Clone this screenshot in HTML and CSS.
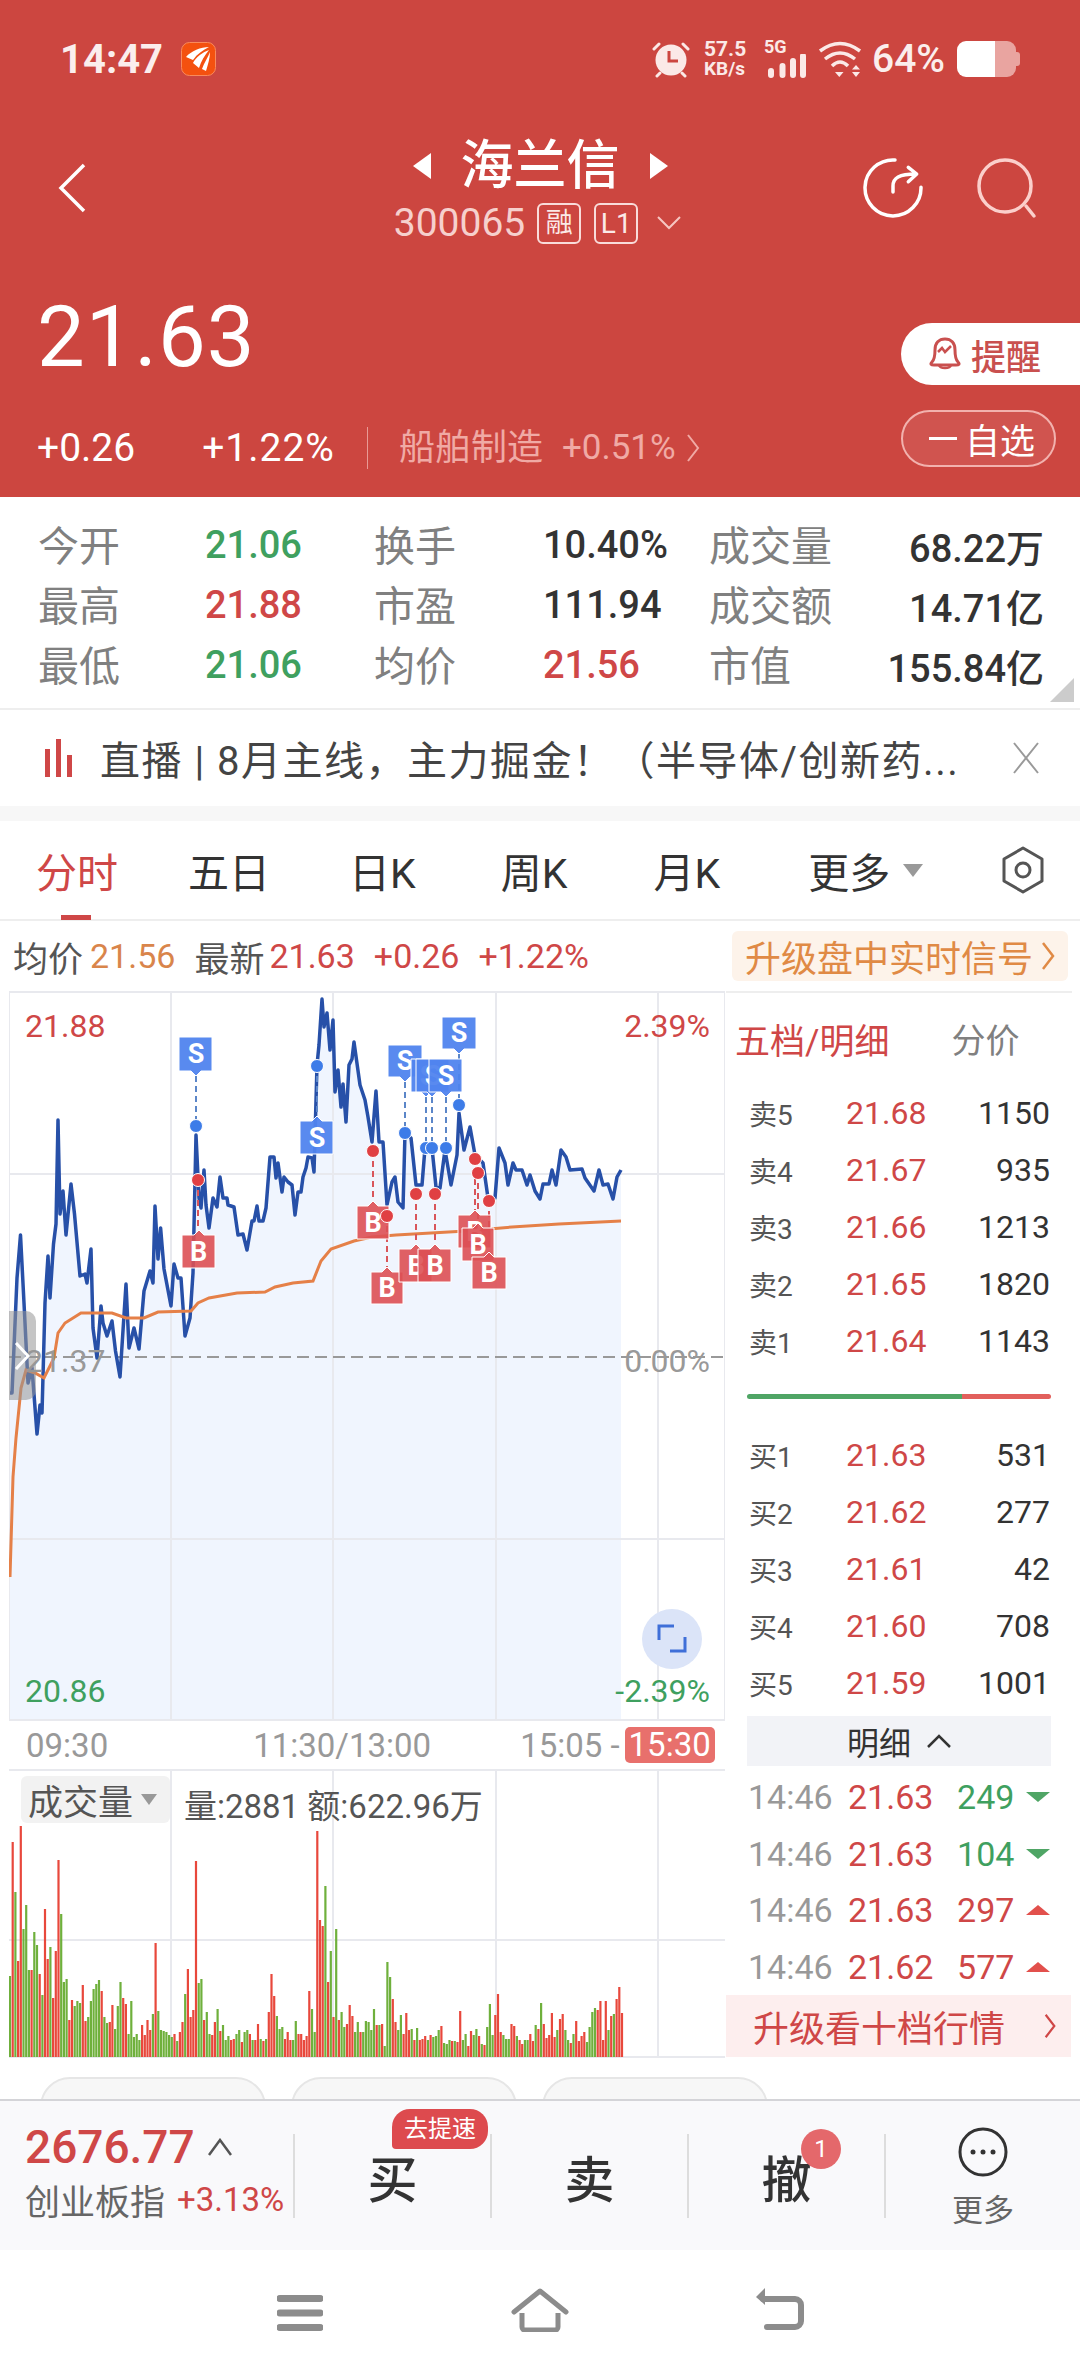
FILE: index.html
```html
<!DOCTYPE html>
<html lang="zh-CN">
<head>
    <meta charset="UTF-8">
    <meta name="viewport" content="width=device-width, initial-scale=1.0">
    <title>海兰信 300065</title>
    <link rel="stylesheet" href="styles.css">
</head>
<body>
<div class="page">
    <!-- 顶部红色行情区 -->
    <div class="head">
        <div class="status">
            <span class="clock">14:47</span>
            <svg class="app-logo" viewBox="0 0 35 34"><rect x=".5" y=".5" width="34" height="33" rx="8" fill="#f4510f" stroke="#f98a5c"/><path d="M28 5C20 5 10 9 5 15l7 3C16 12 22 8 28 5zM28 8C22 10 15 15 12 21l6 5C20 19 24 13 28 8zM29 10C27 15 23 21 21 27l4 2C27 22 29 16 29 10z" fill="#fff"/></svg>
            <div class="status-right">
                <svg class="ico-alarm" viewBox="0 0 38 38"><circle cx="19" cy="20" r="15.500" fill="#fbe9e7"/><path d="M17 11v10h9" fill="none" stroke="#cc4640" stroke-width="3"/><path d="M2 9l5-5M36 9l-5-5M8 33l-3 3M30 33l3 3" stroke="#fbe9e7" stroke-width="3" stroke-linecap="round"/></svg>
                <div class="speed"><span class="speed-num">57.5</span><span>KB/s</span></div>
                <div class="net">
                    <span class="net-text">5G</span>
                    <svg class="ico-signal" viewBox="0 0 42 24"><path d="M7 21v-4M18.500 21v-9M29 21V7M39 21V2" stroke="#fbe9e7" stroke-width="6" stroke-linecap="round"/></svg>
                </div>
                <svg class="ico-wifi" viewBox="0 0 44 36"><path d="M2 10Q22-5 42 10M7 18Q22 6 37 18M14 25Q22 17 30 25" fill="none" stroke="#fbe9e7" stroke-width="3.5"/><path d="M17 31h8.500l-4.200 5zM34 28.500l4-4.500 4 4.500zM34 31h8l-4 5z" fill="#fbe9e7"/></svg>
                <span class="batt-num">64%</span>
                <div class="battery"><div class="battery-fill"></div></div>
            </div>
        </div>
        <div class="nav">
            <svg class="ico-back" viewBox="0 0 28 50"><path d="M26 2L3 25l23 23" fill="none" stroke="#fff" stroke-width="3.5"/></svg>
            <div class="title-box">
                <div class="title">
                    <span class="tri-left"></span>
                    <span>海兰信</span>
                    <span class="tri-right"></span>
                </div>
                <div class="code">
                    <span>300065</span>
                    <span class="tag">融</span>
                    <span class="tag tag-l1">L1</span>
                    <svg class="ico-down" viewBox="0 0 24 14"><path d="M1 1l11 11L23 1" fill="none" stroke="#f6c6c2" stroke-width="2"/></svg>
                </div>
            </div>
            <div class="nav-right">
                <svg class="ico-share" viewBox="0 0 60 60"><path d="M32 2A28 28 0 1 0 58 29.300" fill="none" stroke="#fff" stroke-width="3.5" stroke-linecap="round"/><path d="M30 34v-6c0-8 6-12 23-12M45.300 9.300L53.700 16l-8.400 7.700" fill="none" stroke="#fff" stroke-width="3.5" stroke-linecap="round" stroke-linejoin="round"/></svg>
                <svg class="ico-search" viewBox="0 0 62 62"><circle cx="28" cy="29" r="26" fill="none" stroke="#fbcfcb" stroke-width="3.5"/><path d="M49 49l8 10" stroke="#fbcfcb" stroke-width="3.5" stroke-linecap="round"/></svg>
            </div>
        </div>
        <div class="quote">
            <div class="quote-left">
                <div class="price">21.63</div>
                <div class="change">
                    <span class="chg-a">+0.26</span>
                    <span class="chg-b">+1.22%</span>
                    <span class="chg-sep"></span>
                    <span class="sector">船舶制造</span>
                    <span class="sector-pct">+0.51%</span>
                    <svg class="ico-more" viewBox="0 0 14 30"><path d="M2 2l10 13L2 28" fill="none" stroke="#f0aaa5" stroke-width="2"/></svg>
                </div>
            </div>
            <div class="quote-right">
                <div class="btn-remind">
                    <svg class="ico-bell" viewBox="0 0 34 34"><path d="M4 25C7 22 7 18 7 13 7 6 11 2 17 2s10 4 10 11c0 5 0 9 3 12 2 2 1 3-2 3H6c-3 0-4-1-2-3z" fill="none" stroke="#c9504f" stroke-width="3" stroke-linejoin="round"/><path d="M11 28c1 4 11 4 12 0M10 15l4-4 3 4 6-6" fill="none" stroke="#c9504f" stroke-width="2.5"/></svg>
                    <span>提醒</span>
                </div>
                <div class="btn-watch"><span class="watch-dash"></span>自选</div>
            </div>
        </div>
    </div>

    <!-- 盘口数据 -->
    <div class="stats">
        <span class="lab">今开</span><span class="val green">21.06</span><span class="lab">换手</span><span class="val">10.40%</span><span class="lab">成交量</span><span class="val end">68.22万</span>
        <span class="lab">最高</span><span class="val red">21.88</span><span class="lab">市盈</span><span class="val">111.94</span><span class="lab">成交额</span><span class="val end">14.71亿</span>
        <span class="lab">最低</span><span class="val green">21.06</span><span class="lab">均价</span><span class="val red">21.56</span><span class="lab">市值</span><span class="val end">155.84亿</span>
        <span class="corner"></span>
    </div>

    <div class="live">
        <div class="live-bars"><i></i><i></i><i></i></div>
        <div class="live-text">直播 | 8月主线，主力掘金！（半导体/创新药...</div>
        <svg class="ico-close" viewBox="0 0 28 34"><path d="M2 2l24 30M26 2L2 32" stroke="#9a9a9a" stroke-width="2" fill="none"/></svg>
    </div>
    <div class="gap-band"></div>

    <div class="tabs">
        <div class="tab current">分时</div>
        <div class="tab t2">五日</div>
        <div class="tab t3">日K</div>
        <div class="tab t4">周K</div>
        <div class="tab t5">月K</div>
        <div class="tab t6">更多<span class="tab-tri"></span></div>
        <svg class="ico-hex" viewBox="0 0 44 48"><path d="M22 2l19 11v22L22 46 3 35V13z" fill="none" stroke="#555" stroke-width="3" stroke-linejoin="round"/><circle cx="22" cy="24" r="7" fill="none" stroke="#555" stroke-width="3"/></svg>
    </div>

    <div class="info">
        <span class="info-lab">均价</span><span class="info-avg">21.56</span>
        <span class="info-lab info-new">最新</span><span class="info-red">21.63</span>
        <span class="info-red info-c1">+0.26</span>
        <span class="info-red info-c2">+1.22%</span>
        <div class="upgrade-pill">升级盘中实时信号<svg class="ico-more2" viewBox="0 0 14 30"><path d="M2 2l10 13L2 28" fill="none" stroke="#e08a45" stroke-width="2.5"/></svg></div>
    </div>

    <div class="main">
        <div class="left">
            <svg class="chart" viewBox="9 991 716 730">
                <polygon id="area" class="area" points=""/>
                <path class="grid" d="M9 992H725V1720H9zM171 992V1720M333 992V1720M496 992V1720M658 992V1720M9 1174H725M9 1539H725"/>
                <path class="zero" d="M9 1357H725"/>
                <polyline id="price-line" class="line-price" points="10,1393 12,1393 17,1278 20.5,1235 24,1303 28,1383 32,1368 37,1434 40,1405 42,1413 45,1303 48,1256 50,1298 53.5,1244 56,1224 58,1120 60,1214 63,1191 66,1235 71,1184 74.5,1214 80,1276 85,1274 87,1283 91,1249 93,1328 97,1358 101,1306 103,1323 107,1336 112,1321 115.5,1351 120,1377 126,1284 129,1348 134,1328 139,1349 144,1291 150,1271 153,1283 155,1206 158,1259 160.6,1228 164,1269 171,1306 174,1264 178,1278 181,1278 185,1336 190,1318 193,1273 196,1135 199,1198 201,1208 204,1170 206,1205 209,1228 213,1198 217,1207 220,1177 223,1198 227,1198 228,1205 234,1207 238,1235 243,1234 247,1250 252,1221 254,1221 257,1206 259,1221 263,1221 266,1208 270,1157 274,1157 276,1178 278,1163 282,1192 284,1177 288,1182 292,1185 295,1215 298,1192 301,1192 303,1177 306,1168 308,1157 312,1158 314,1172 317,1065 319,1045 322,999 324,1027 327,1013 330,1050 333,1020 335,1092 338,1070 341,1107 343,1084 346,1122 349,1065 352,1059 354,1042 360,1085 365,1100 368,1117 372,1142 376,1091 379,1142 383,1142 387,1205 392,1182 395,1177 398,1202 403,1208 405,1133 411,1138 416,1185 422,1185 425,1148 432,1148 436,1187 440,1188 445,1150 451,1185 457,1155 459,1113 464,1150 470,1127 475,1155 483,1163 488,1198 495,1198 499,1148 505,1163 508,1185 513,1163 516,1170 522,1170 527,1185 530,1175 535,1191 540,1199 543,1184 549,1184 552,1170 556,1185 561,1150 566,1157 570,1170 582,1169 585,1178 594,1191 599,1170 603,1185 608,1184 613,1199 617,1177 621,1170"/>
                <polyline class="line-avg" points="10,1577 13,1477 16,1438 21,1388 26,1370 35,1373 44,1378 54,1358 58,1333 65,1323 81,1313 98,1313 112,1313 126,1318 144,1318 158,1312 191,1311 198,1303 209,1298 237,1293 265,1292 275,1287 293,1283 313,1281 321,1261 331,1249 354,1241 372,1237 396,1235 466,1231 512,1227 559,1224 621,1221"/>

                <!-- 买卖点 -->
                <path class="lead-s" d="M196 1076V1126M317 1066V1116M405 1082V1133M426 1097V1148M432 1097V1148M446 1097V1148M459 1054V1105"/>
                <path class="lead-b" d="M198 1180V1230M373 1151V1201M387 1216V1267M416 1194V1244M435 1194V1244M475 1159V1210M478 1173V1223M489 1201V1252"/>
                <g class="tag-b"><path d="M182 1235h12l5-5 5 5h11v33h-33z"/><text x="198.5" y="1261">B</text></g>
                <g class="tag-b"><path d="M357 1206h11l5-5 5 5h11v33h-32z"/><text x="373" y="1232">B</text></g>
                <g class="tag-b"><path d="M371 1272h11l5-5 5 5h11v32h-32z"/><text x="387" y="1297">B</text></g>
                <g class="tag-b"><path d="M399 1249h12l5-5 5 5h11v33h-33z"/><text x="416" y="1275">B</text></g>
                <g class="tag-b"><path d="M418 1249h12l5-5 5 5h11v33h-33z"/><text x="435" y="1275">B</text></g>
                <g class="tag-b"><path d="M458 1215h12l5-5 5 5h11v33h-33z"/><text x="475" y="1241">B</text></g>
                <g class="tag-b"><path d="M462 1228h11l5-5 5 5h11v33h-32z"/><text x="478" y="1254">B</text></g>
                <g class="tag-b"><path d="M472 1257h12l5-5 5 5h12v32h-34z"/><text x="489" y="1282">B</text></g>
                <g class="tag-s"><path d="M179 1037h33v34h-11l-5 5-5-5h-12z"/><text x="196" y="1063">S</text></g>
                <g class="tag-s"><path d="M300 1121h12l5-5 5 5h11v33h-33z"/><text x="317" y="1147">S</text></g>
                <g class="tag-s"><path d="M388 1045h34v32h-12l-5 5-5-5h-12z"/><text x="405" y="1070">S</text></g>
                <g class="tag-s"><path d="M411 1059h34v33h-14l-5 5-5-5h-10z"/><text x="428" y="1085">S</text></g>
                <g class="tag-s"><path d="M416 1059h33v33h-12l-5 5-5-5h-11z"/><text x="433" y="1085">S</text></g>
                <g class="tag-s"><path d="M429 1059h33v33h-11l-5 5-5-5h-12z"/><text x="446" y="1085">S</text></g>
                <g class="tag-s"><path d="M442 1017h34v32h-12l-5 5-5-5h-12z"/><text x="459" y="1042">S</text></g>
                <g class="dot-s">
                    <circle cx="196" cy="1126" r="6.5"/><circle cx="317" cy="1066" r="6.5"/><circle cx="405" cy="1133" r="6.5"/><circle cx="426" cy="1148" r="6.5"/><circle cx="432" cy="1148" r="6.5"/><circle cx="446" cy="1148" r="6.5"/><circle cx="459" cy="1105" r="6.5"/>
                </g>
                <g class="dot-b">
                    <circle cx="198" cy="1180" r="6.5"/><circle cx="373" cy="1151" r="6.5"/><circle cx="387" cy="1216" r="6.5"/><circle cx="416" cy="1194" r="6.5"/><circle cx="435" cy="1194" r="6.5"/><circle cx="475" cy="1159" r="6.5"/><circle cx="478" cy="1173" r="6.5"/><circle cx="489" cy="1201" r="6.5"/>
                </g>

                <text class="axis red-fill" x="25" y="1037">21.88</text>
                <text class="axis red-fill end-anchor" x="710" y="1037">2.39%</text>
                <text class="axis gray-fill" x="25" y="1372">21.37</text>
                <text class="axis gray-fill end-anchor" x="710" y="1372">0.00%</text>
                <text class="axis green-fill" x="25" y="1702">20.86</text>
                <text class="axis green-fill end-anchor" x="710" y="1702">-2.39%</text>

                <path class="handle" d="M9 1311h17a10 10 0 0 1 10 10v69a10 10 0 0 1-10 10H9z"/>
                <path d="M16 1343l12 13-12 13" fill="none" stroke="#fff" stroke-width="3"/>
                <circle cx="672" cy="1639" r="30" fill="#dbe4f8"/>
                <path d="M659 1640v-14h15M685 1637v14h-15" fill="none" stroke="#3f6fd8" stroke-width="3"/>
            </svg>
            <div class="times">
                <span class="time-a">09:30</span>
                <span class="time-b">11:30/13:00</span>
                <span class="time-c">15:05 -</span>
                <span class="time-end">15:30</span>
            </div>
            <div class="vol-wrap">
                <svg id="vol" class="vol" viewBox="9 1769 716 290">
                    <path class="grid" d="M9 1770H725M9 1940H725M9 2057H725M171 1770V2057M333 1770V2057M496 1770V2057M658 1770V2057"/>
                </svg>
                <div class="vol-kind">成交量<span class="vol-tri"></span></div>
                <div class="vol-text">量:2881 额:622.96万</div>
            </div>
        </div>

        <div class="side">
            <div class="side-head"><span class="side-on">五档/明细</span><span class="side-off">分价</span></div>
            <div class="book">
                <div class="book-row"><span>卖5</span><span class="red">21.68</span><span>1150</span></div>
                <div class="book-row"><span>卖4</span><span class="red">21.67</span><span>935</span></div>
                <div class="book-row"><span>卖3</span><span class="red">21.66</span><span>1213</span></div>
                <div class="book-row"><span>卖2</span><span class="red">21.65</span><span>1820</span></div>
                <div class="book-row"><span>卖1</span><span class="red">21.64</span><span>1143</span></div>
                <div class="ratio"><div class="ratio-buy"></div><div class="ratio-sell"></div></div>
                <div class="book-row"><span>买1</span><span class="red">21.63</span><span>531</span></div>
                <div class="book-row"><span>买2</span><span class="red">21.62</span><span>277</span></div>
                <div class="book-row"><span>买3</span><span class="red">21.61</span><span>42</span></div>
                <div class="book-row"><span>买4</span><span class="red">21.60</span><span>708</span></div>
                <div class="book-row"><span>买5</span><span class="red">21.59</span><span>1001</span></div>
                <div class="detail-bar">明细<svg class="ico-up" viewBox="0 0 24 14"><path d="M1 13L12 2l11 11" fill="none" stroke="#333" stroke-width="2.5"/></svg></div>
            </div>
            <div class="ticks">
                <div class="tick"><span class="tick-time">14:46</span><span class="red">21.63</span><span class="tick-vol green">249</span><span class="arrow-down"></span></div>
                <div class="tick"><span class="tick-time">14:46</span><span class="red">21.63</span><span class="tick-vol green">104</span><span class="arrow-down"></span></div>
                <div class="tick"><span class="tick-time">14:46</span><span class="red">21.63</span><span class="tick-vol red">297</span><span class="arrow-up"></span></div>
                <div class="tick"><span class="tick-time">14:46</span><span class="red">21.62</span><span class="tick-vol red">577</span><span class="arrow-up"></span></div>
            </div>
            <div class="upgrade-box">升级看十档行情<svg class="ico-more3" viewBox="0 0 14 30"><path d="M2 2l10 13L2 28" fill="none" stroke="#cf4747" stroke-width="2.5"/></svg></div>
        </div>
    </div>

    <div class="chips"><div class="chip"></div><div class="chip"></div><div class="chip"></div></div>

    <!-- 底部交易栏 -->
    <div class="bottom">
        <div class="index">
            <div class="index-top"><span class="index-num">2676.77</span><svg class="ico-up2" viewBox="0 0 24 18"><path d="M1 17L12 2l11 15" fill="none" stroke="#555" stroke-width="2.5"/></svg></div>
            <div class="index-sub"><span class="index-name">创业板指</span><span class="index-pct">+3.13%</span></div>
        </div>
        <div class="act act-buy">买<span class="speedup">去提速</span></div>
        <div class="act">卖</div>
        <div class="act act-cancel">撤<span class="count">1</span></div>
        <div class="more">
            <svg class="ico-dots" viewBox="0 0 50 50"><circle cx="25" cy="25" r="23" fill="none" stroke="#333" stroke-width="3"/><circle cx="15" cy="25" r="2.5" fill="#333"/><circle cx="25" cy="25" r="2.5" fill="#333"/><circle cx="35" cy="25" r="2.5" fill="#333"/></svg>
            <span>更多</span>
        </div>
    </div>

    <div class="sysnav">
        <svg class="ico-menu" viewBox="0 0 46 36"><path d="M3 3.5h40M3 18h40M3 32.500h40" stroke="#8c8c8c" stroke-width="7" stroke-linecap="round"/></svg>
        <svg class="ico-home" viewBox="0 0 58 44"><path d="M3 24L29 3l26 21" fill="none" stroke="#8c8c8c" stroke-width="5" stroke-linejoin="round" stroke-linecap="round"/><path d="M11 25v14a3 3 0 0 0 3 3h30a3 3 0 0 0 3-3V25" fill="none" stroke="#8c8c8c" stroke-width="5"/></svg>
        <svg class="ico-return" viewBox="0 0 48 42"><path d="M0 9L9 0v17z" fill="#8c8c8c"/><path d="M7 11h32a6 6 0 0 1 6 6v16a6 6 0 0 1-6 6H11" fill="none" stroke="#8c8c8c" stroke-width="6" stroke-linecap="round"/></svg>
    </div>
</div>
<script src="chart.js"></script>
</body>
</html>
```

FILE: styles.css
```css
*{
    padding: 0;
    margin: 0;
    box-sizing: border-box;
}

body{
    background: #fff;
    font-family: "Roboto", "Noto Sans CJK SC", sans-serif;
    color: #333;
}

.page{
    width: 1080px;
    height: 2376px;
    display: flex;
    flex-direction: column;
    overflow: hidden;
}

.red{ color: #cf4747; }
.green{ color: #3fa05f; }

/* 顶部 */
.head{
    height: 497px;
    flex: none;
    background: #cc4640;
    color: #fff;
}

.status{
    height: 118px;
    padding: 0 60px;
    display: flex;
    align-items: center;
}

.clock{
    font-size: 40px;
    font-weight: 700;
    color: #fbeeed;
}

.app-logo{
    width: 35px;
    height: 34px;
    margin-left: 18px;
}

.status-right{
    margin-left: auto;
    display: flex;
    align-items: center;
}

.ico-alarm{ width: 38px; height: 38px; flex: none; }

.speed{
    margin-left: 14px;
    width: 48px;
    flex: none;
    display: flex;
    flex-direction: column;
    font-size: 19px;
    line-height: 20px;
    font-weight: 700;
    color: #fbe9e7;
}

.speed-num{
    font-size: 21px;
}

.net{
    width: 42px;
    height: 38px;
    margin-left: 12px;
    flex: none;
    display: flex;
    flex-direction: column;
}

.net-text{
    height: 14px;
    font-size: 18px;
    line-height: 14px;
    font-weight: 700;
    color: #fbe9e7;
}

.ico-signal{
    width: 42px;
    height: 24px;
}

.ico-wifi{
    width: 44px;
    height: 36px;
    margin-left: 12px;
    flex: none;
}

.batt-num{
    width: 72px;
    margin-left: 10px;
    font-size: 39px;
    font-weight: 500;
    color: #fbeeed;
    flex: none;
}

.battery{
    margin-left: 13px;
    width: 63px;
    height: 36px;
    padding-right: 4px;
    flex: none;
    position: relative;
}

.battery-fill{
    width: 59px;
    height: 100%;
    border-radius: 9px;
    background: linear-gradient(90deg, #fff 38px, #e9a4a0 38px);
}

/* 电池正极 */
.battery::after{
    content: "";
    position: absolute;
    right: 0;
    top: 11px;
    width: 4px;
    height: 14px;
    border-radius: 0 3px 3px 0;
    background: #e9a4a0;
}

.nav{
    height: 130px;
    padding: 0 41px 0 58px;
    display: flex;
    align-items: center;
    position: relative;
}

.ico-back{
    width: 28px;
    height: 50px;
    margin-top: 10px;
}

.title-box{
    position: absolute;
    left: 0;
    right: 0;
    top: 0;
    display: flex;
    flex-direction: column;
    align-items: center;
}

.title{
    height: 82px;
    margin-top: 7px;
    display: flex;
    align-items: center;
    gap: 30px;
    font-size: 53px;
    font-weight: 500;
    line-height: 82px;
}

.tri-left, .tri-right{
    width: 0;
    height: 0;
    border-top: 13px solid transparent;
    border-bottom: 13px solid transparent;
}

.tri-left{ border-right: 18px solid #fff; }
.tri-right{ border-left: 18px solid #fff; }

.code{
    height: 42px;
    display: flex;
    align-items: center;
    font-size: 39px;
    color: #f6d0cd;
    margin-top: -5px;
    margin-right: 5px;
}

.tag{
    width: 44px;
    height: 41px;
    margin-left: 12px;
    border: 2px solid #f9dcda;
    border-radius: 6px;
    font-size: 27px;
    line-height: 37px;
    text-align: center;
    color: #fbe9e7;
}

.tag-l1{
    margin-left: 13px;
    font-size: 28px;
}

.ico-down{
    width: 24px;
    height: 14px;
    margin-left: 19px;
}

.nav-right{
    margin-left: auto;
    display: flex;
    align-items: center;
    gap: 54px;
    margin-top: 10px;
}

.ico-share{ width: 60px; height: 60px; }
.ico-search{ width: 62px; height: 62px; }

.quote{
    height: 249px;
    display: flex;
    justify-content: space-between;
}

.quote-left{
    padding: 47px 0 0 37px;
}

.price{
    height: 84px;
    font-size: 85px;
    line-height: 84px;
    letter-spacing: 1px;
}

.change{
    height: 44px;
    margin-top: 47px;
    display: flex;
    align-items: center;
    font-size: 39px;
    line-height: 44px;
}

.chg-b{
    margin-left: 67px;
    letter-spacing: 1px;
}

.chg-sep{
    width: 1px;
    height: 42px;
    margin-left: 32px;
    background: #e99a95;
}

.sector{
    margin-left: 31px;
    font-size: 36px;
    color: #f0aaa5;
}

.sector-pct{
    margin-left: 19px;
    font-size: 35px;
    color: #f0aaa5;
}

.ico-more{
    width: 14px;
    height: 30px;
    margin-left: 10px;
}

.quote-right{
    width: 179px;
    padding-top: 75px;
}

.btn-remind{
    height: 62px;
    display: flex;
    align-items: center;
    padding-left: 27px;
    background: #fff;
    border-radius: 31px 0 0 31px;
    color: #c9504f;
    font-size: 35px;
    font-weight: 500;
}

.ico-bell{
    width: 34px;
    height: 34px;
    margin-right: 9px;
}

.btn-watch{
    width: 155px;
    height: 57px;
    margin-top: 25px;
    display: flex;
    align-items: center;
    padding-left: 26px;
    border: 2px solid #f2b2ae;
    border-radius: 29px;
    background: rgba(255,255,255,.08);
    font-size: 35px;
}

.watch-dash{
    width: 28px;
    height: 3px;
    margin-right: 8px;
    background: #fff;
}

/* 盘口 */
.stats{
    height: 213px;
    flex: none;
    padding: 18px 36px 0 38px;
    display: grid;
    grid-template-columns: 167px 169px 169px 166px 120px 1fr;
    grid-auto-rows: 60px;
    align-items: center;
    border-bottom: 2px solid #eee;
    position: relative;
}

.lab{
    font-size: 41px;
    color: #808080;
    margin-bottom: 5px;
    white-space: nowrap;
}

.val{
    font-size: 38px;
    font-weight: 500;
    color: #333;
}

.val.red{ color: #cf4747; }
.val.green{ color: #3fa05f; }

.end{
    text-align: right;
    white-space: nowrap;
}

.corner{
    position: absolute;
    right: 6px;
    bottom: 6px;
    width: 0;
    height: 0;
    border-left: 24px solid transparent;
    border-bottom: 24px solid #ccc;
}

/* 直播条 */
.live{
    height: 96px;
    flex: none;
    padding: 0 40px 0 45px;
    display: flex;
    align-items: center;
}

.live-bars{
    width: 30px;
    display: flex;
    align-items: flex-end;
    gap: 6px;
}

.live-bars i{
    width: 5px;
    height: 28px;
    background: #cf4747;
}

.live-bars i:nth-child(2){ height: 38px; }
.live-bars i:nth-child(3){ height: 22px; }

.live-text{
    margin-left: 25px;
    font-size: 40px;
    letter-spacing: 1.5px;
    color: #444;
    white-space: nowrap;
}

.ico-close{
    width: 28px;
    height: 34px;
    margin-left: auto;
}

.gap-band{
    height: 15px;
    flex: none;
    background: #f7f7f7;
}

/* 分时 tab */
.tabs{
    height: 100px;
    flex: none;
    display: flex;
    align-items: center;
    padding-left: 36px;
    position: relative;
    border-bottom: 2px solid #eee;
}

.tab{
    font-size: 41px;
    color: #333;
    white-space: nowrap;
}

.tab.current{
    color: #cf4747;
}

.tab.current::after{
    content: "";
    position: absolute;
    left: 61px;
    bottom: -1px;
    width: 30px;
    height: 5px;
    background: #cf4747;
}

.t2{ margin-left: 70px; }
.t3{ margin-left: 79px; }
.t4{ margin-left: 85px; }
.t5{ margin-left: 86px; }
.t6{ margin-left: 88px; display: flex; align-items: center; }

.tab-tri{
    margin-left: 13px;
    width: 0;
    height: 0;
    border-left: 10px solid transparent;
    border-right: 10px solid transparent;
    border-top: 13px solid #999;
}

.ico-hex{
    width: 44px;
    height: 48px;
    margin-left: 78px;
}

.info{
    height: 70px;
    flex: none;
    display: flex;
    align-items: center;
    padding-left: 13px;
    font-size: 34px;
    white-space: nowrap;
}

.info-lab{
    font-size: 35px;
    color: #555;
}

.info-avg{
    margin-left: 7px;
    color: #d9854b;
}

.info-new{ margin-left: 19px; }

.info-red{
    margin-left: 5px;
    color: #cf4747;
}

.info-c1{ margin-left: 19px; }
.info-c2{ margin-left: 19px; }

.upgrade-pill{
    margin-left: auto;
    margin-right: 12px;
    width: 336px;
    height: 50px;
    display: flex;
    align-items: center;
    padding: 0 0 0 13px;
    background: #fdf3ea;
    border-radius: 6px;
    font-size: 36px;
    color: #e08a45;
}

.ico-more2{
    width: 14px;
    height: 30px;
    margin-left: 8px;
}

/* 图表 */
.main{
    display: flex;
    flex: none;
    height: 1067px;
}

.left{
    width: 726px;
    padding-left: 9px;
    flex: none;
}

.chart{
    display: block;
    width: 716px;
    height: 730px;
}

.area{ fill: #f0f5fe; }

.grid{
    fill: none;
    stroke: #e8e9ee;
    stroke-width: 2;
}

.zero{
    stroke: #999;
    stroke-width: 2;
    stroke-dasharray: 12 6;
}

.line-price{
    fill: none;
    stroke: #2750a8;
    stroke-width: 3.5;
    stroke-linejoin: round;
}

.line-avg{
    fill: none;
    stroke: #e58048;
    stroke-width: 3;
}

.lead-s, .lead-b{
    fill: none;
    stroke-width: 2;
    stroke-dasharray: 6 4;
}

.lead-s{ stroke: #5b86c8; }
.lead-b{ stroke: #d9555a; }

.tag-b path, .tag-s path{
    stroke: #fff;
    stroke-width: 1;
}

.tag-b path{ fill: rgba(221,80,84,.9); }
.tag-s path{ fill: rgba(80,132,238,.95); }

.tag-b text, .tag-s text{
    font-size: 27px;
    font-weight: 700;
    fill: #fff;
    text-anchor: middle;
}

.dot-s circle, .dot-b circle{
    stroke: #fff;
    stroke-width: 1;
}

.dot-s circle{ fill: #3d7ce8; }
.dot-b circle{ fill: #e04043; }

.axis{ font-size: 32px; }
.end-anchor{ text-anchor: end; }
.red-fill{ fill: #cf4747; }
.green-fill{ fill: #3fa05f; }
.gray-fill{ fill: #999; }

.handle{ fill: rgba(150,150,150,.55); }

.times{
    height: 48px;
    display: flex;
    align-items: center;
    font-size: 33px;
    color: #999;
    white-space: nowrap;
}

.time-a{ margin-left: 17px; }
.time-b{ margin-left: 145px; }
.time-c{ margin-left: 89px; }

.time-end{
    margin-left: 5px;
    width: 90px;
    height: 36px;
    line-height: 36px;
    text-align: center;
    background: #e8706c;
    border-radius: 5px;
    color: #fff;
}

.vol-wrap{
    position: relative;
}

.vol{
    display: block;
    width: 716px;
    height: 290px;
}

.vol-kind{
    position: absolute;
    left: 12px;
    top: 7px;
    width: 149px;
    height: 47px;
    padding-left: 7px;
    display: flex;
    align-items: center;
    background: #f2f2f2;
    border-radius: 6px;
    font-size: 35px;
    color: #555;
}

.vol-tri{
    margin-left: 8px;
    width: 0;
    height: 0;
    border-left: 8px solid transparent;
    border-right: 8px solid transparent;
    border-top: 11px solid #999;
}

.vol-text{
    position: absolute;
    left: 175px;
    top: 11px;
    font-size: 33px;
    color: #555;
    white-space: nowrap;
}

/* 右侧五档 */
.side{
    width: 346px;
    flex: none;
    border-top: 2px solid #eee;
}

.side-head{
    height: 91px;
    padding-left: 9px;
    display: flex;
    align-items: center;
    font-size: 35px;
    white-space: nowrap;
}

.side-on{ color: #cf4747; }

.side-off{
    margin-left: 62px;
    color: #808080;
    font-size: 34px;
}

.book{
    padding: 0 21px;
}

.book-row{
    height: 57px;
    display: grid;
    grid-template-columns: 99px 100px 1fr;
    align-items: center;
    font-size: 32px;
}

.book-row span:first-child{
    padding-left: 2px;
    font-size: 28px;
    color: #555;
}

.book-row span:last-child{
    text-align: right;
    padding-right: 1px;
    color: #333;
}

.ratio{
    margin: 25px 0 27px;
    height: 5px;
    display: flex;
}

.ratio-buy{
    width: 215px;
    background: #4fa565;
    border-radius: 3px 0 0 3px;
}

.ratio-sell{
    flex: 1;
    background: #e2605c;
    border-radius: 0 3px 3px 0;
}

.detail-bar{
    height: 50px;
    margin-top: 5px;
    display: flex;
    align-items: center;
    justify-content: center;
    gap: 16px;
    background: #f2f3f7;
    font-size: 32px;
}

.ico-up{
    width: 24px;
    height: 14px;
}

.ticks{
    margin-top: 3px;
    padding-left: 22px;
}

.tick{
    height: 56.5px;
    display: flex;
    align-items: center;
    font-size: 34px;
    white-space: nowrap;
}

.tick-time{
    width: 100px;
    color: #999;
}

.tick-vol{
    width: 81px;
    text-align: right;
}

.arrow-down, .arrow-up{
    width: 0;
    height: 0;
    margin-left: 12px;
    border-left: 12px solid transparent;
    border-right: 12px solid transparent;
}

.arrow-down{ border-top: 10px solid #4fa565; }
.arrow-up{ border-bottom: 10px solid #e2504c; }

.upgrade-box{
    margin-right: 1px;
    height: 62px;
    display: flex;
    align-items: center;
    padding-left: 27px;
    background: #fdeeee;
    font-size: 36px;
    color: #cf4747;
}

.ico-more3{
    width: 14px;
    height: 26px;
    margin-left: 38px;
}

/* 被底栏遮住的标签 */
.chips{
    height: 41px;
    flex: none;
    padding: 19px 0 0 40px;
    display: flex;
    gap: 25px;
    overflow: hidden;
}

.chip{
    width: 226px;
    height: 60px;
    border: 2px solid #e6e6e6;
    border-radius: 30px;
    background: #f7f7f7;
}

/* 底栏 */
.bottom{
    height: 151px;
    flex: none;
    border-top: 2px solid #d4d4d8;
    background: #f9f9fb;
    display: flex;
    align-items: center;
    position: relative;
}

.index{
    width: 295px;
    height: 84px;
    padding-left: 25px;
    border-right: 2px solid #ddd;
    display: flex;
    flex-direction: column;
    justify-content: center;
    white-space: nowrap;
}

.index-top{
    display: flex;
    align-items: center;
    margin-top: -6px;
}

.index-num{
    font-size: 46px;
    font-weight: 500;
    color: #cf4747;
}

.ico-up2{
    width: 24px;
    height: 18px;
    margin-left: 13px;
}

.index-sub{
    display: flex;
    align-items: center;
}

.index-name{
    font-size: 35px;
    color: #666;
}

.index-pct{
    margin-left: 12px;
    font-size: 33px;
    color: #cf4747;
}

.act{
    width: 197px;
    height: 84px;
    border-right: 2px solid #ddd;
    display: flex;
    align-items: center;
    justify-content: center;
    font-size: 50px;
    font-weight: 500;
    color: #333;
    position: relative;
}

.speedup{
    position: absolute;
    left: 97px;
    top: -25px;
    width: 96px;
    height: 40px;
    background: #dd4a4e;
    border-radius: 18px 18px 18px 4px;
    color: #fff;
    font-size: 24px;
    font-weight: 400;
    line-height: 40px;
    text-align: center;
}

.count{
    position: absolute;
    left: 112px;
    top: -5px;
    width: 40px;
    height: 40px;
    border-radius: 50%;
    background: #e4686b;
    color: #fff;
    font-size: 24px;
    font-weight: 400;
    line-height: 40px;
    text-align: center;
}

.more{
    flex: 1;
    padding-top: 6px;
    display: flex;
    flex-direction: column;
    align-items: center;
    font-size: 31px;
    color: #666;
}

.ico-dots{
    width: 50px;
    height: 50px;
    margin-bottom: 8px;
}

/* 系统导航 */
.sysnav{
    flex: 1;
    background: #fff;
    display: flex;
    align-items: flex-start;
    padding-top: 38px;
    padding-left: 277px;
}

.ico-menu{
    width: 46px;
    height: 36px;
    margin-top: 7px;
}

.ico-home{
    width: 58px;
    height: 44px;
    margin-left: 188px;
}

.ico-return{
    width: 48px;
    height: 42px;
    margin-left: 187px;
}
```

FILE: chart.js
```js
// 价格区域：沿用分时线的点，再封到底边
var line = document.getElementById('price-line');
document.getElementById('area').setAttribute('points', line.getAttribute('points') + ' 621,1720 10,1720');

// 成交量柱：正数为红柱，负数为绿柱，单位 px
var bars = [-81,215,-165,96,231,-128,-152,-87,87,-125,-112,83,-62,148,98,-110,59,106,197,-143,-75,-78,37,57,-51,-56,-54,72,36,-40,-56,-68,-73,-77,66,-40,-34,35,52,-28,-51,-75,59,53,-23,-56,-20,-23,-17,32,22,37,27,-43,114,-46,-27,-26,-25,-22,-20,23,-16,25,35,-63,88,40,47,196,-74,-78,37,-45,-23,22,35,-48,26,-32,-17,-21,17,18,-23,-27,15,-25,-27,23,-17,17,33,-18,16,-18,45,83,61,-41,-28,-30,18,25,17,-17,-36,23,23,17,21,66,-48,-25,226,137,131,-171,75,-106,40,-128,37,-45,-30,33,52,41,-25,-35,25,-25,-36,-35,-27,-48,32,-32,33,-11,-95,-80,58,35,-27,-42,23,44,27,-28,17,-29,17,18,21,-17,22,-20,-21,-27,31,-14,-13,-17,16,-16,15,46,-17,-23,11,26,-22,-28,21,-13,12,-30,-53,-22,42,63,25,-22,-18,-18,33,31,-21,17,13,-17,-17,23,16,-32,28,-54,33,19,22,44,20,-27,38,43,-27,-17,14,-23,36,16,21,25,-15,-30,-45,-49,47,56,17,56,-27,41,-43,58,70,44];

var svg = document.getElementById('vol');
var step = 612 / (bars.length - 1);
var redD = '';
var greenD = '';
for(var i=0; i<bars.length; i++){
    var x = (10 + i * step).toFixed(1);
    var seg = 'M' + x + ' 2057V' + (2057 - Math.abs(bars[i])) + ' ';
    if(bars[i] > 0){
        redD += seg;
    }else{
        greenD += seg;
    }
}

function addBars(d, color){
    var p = document.createElementNS('http://www.w3.org/2000/svg', 'path');
    p.setAttribute('d', d);
    p.setAttribute('stroke', color);
    p.setAttribute('stroke-width', '2.2');
    svg.appendChild(p);
}
addBars(greenD, '#6fb03c');
addBars(redD, '#e8483c');
```
